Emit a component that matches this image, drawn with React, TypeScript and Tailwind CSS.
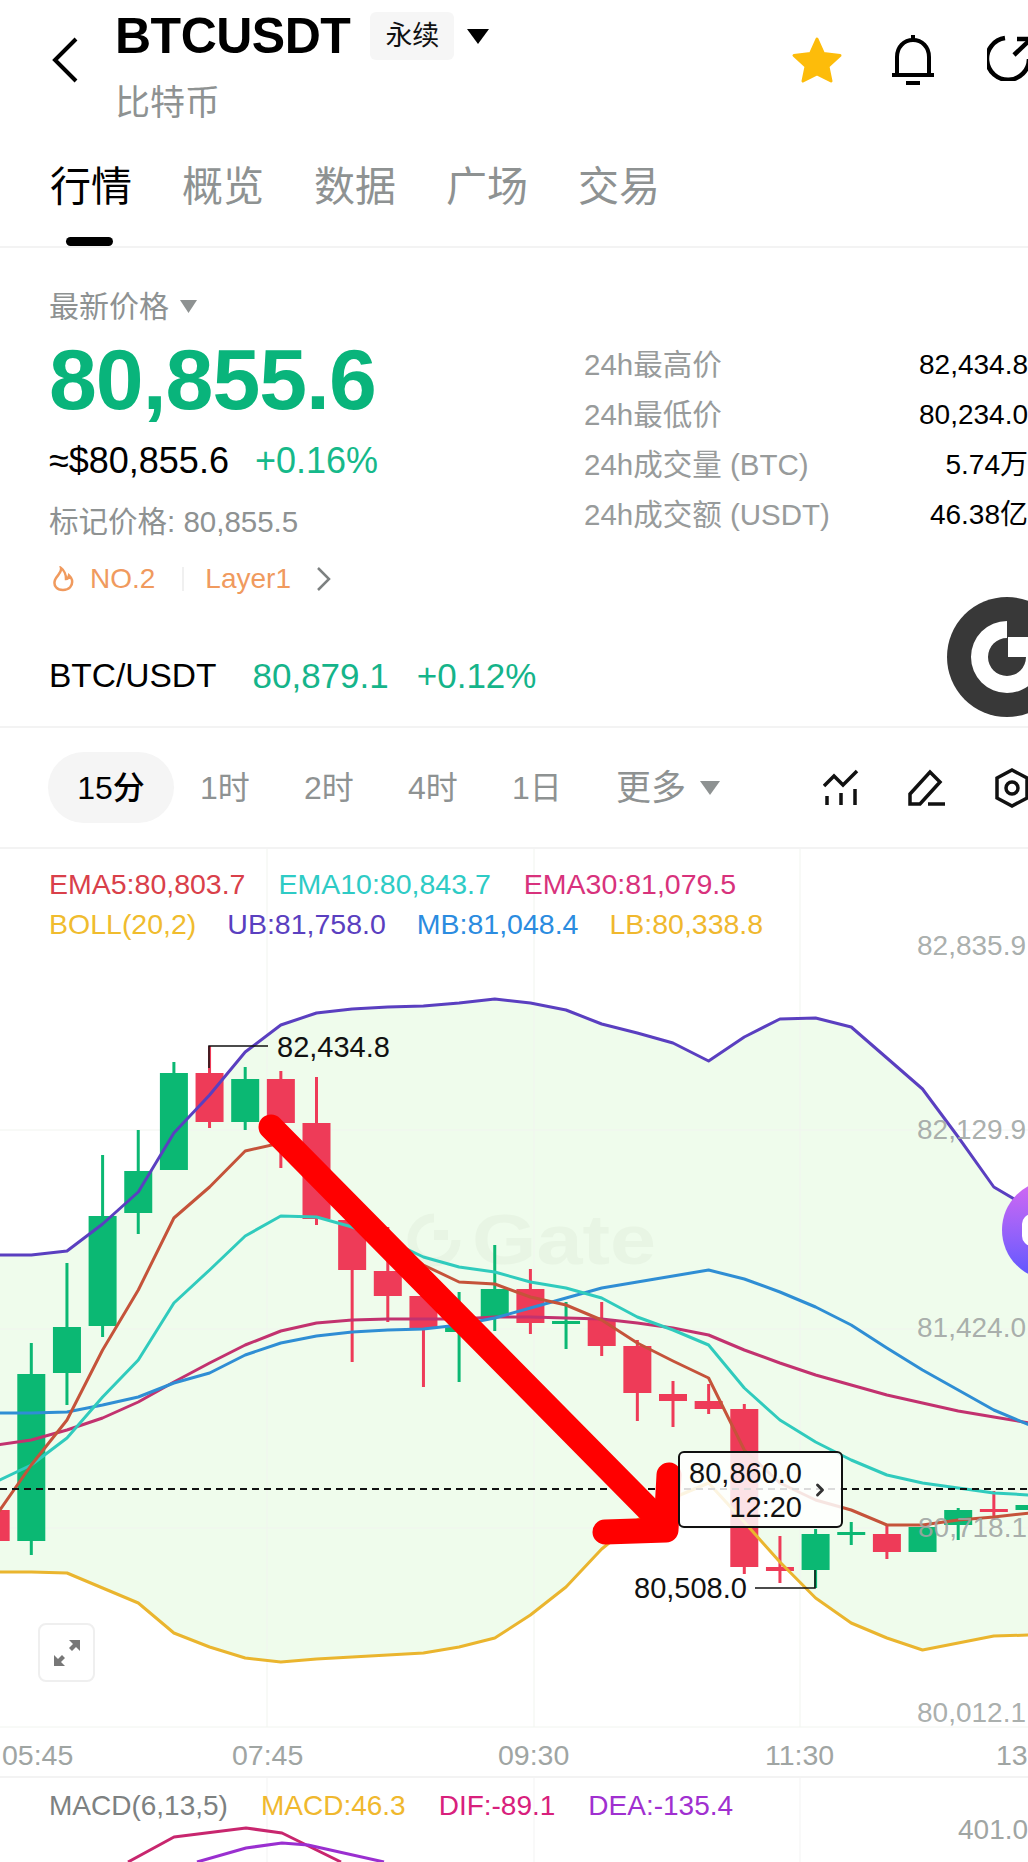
import { ChevronRight } from "lucide-react"

const FONT = "font-['Liberation_Sans','Noto_Sans_CJK_SC',sans-serif]"

const X = (i: number) => 31.3 + 35.65 * i

// y values per candle slot, starting at i = -1
const UB = [1255, 1255, 1251, 1224, 1192, 1133, 1095, 1052, 1025, 1013, 1009, 1007, 1006, 1003, 999, 1003, 1010, 1024, 1033, 1043, 1061, 1037, 1019, 1018, 1027, 1058, 1089, 1137, 1187, 1208]
const LB = [1572, 1572, 1573, 1588, 1603, 1633, 1647, 1658, 1662, 1659, 1657, 1655, 1653, 1647, 1638, 1615, 1587, 1549, 1520, 1498, 1483, 1522, 1562, 1598, 1623, 1638, 1650, 1643, 1636, 1635]
const MB = [1413, 1413, 1412, 1405, 1397, 1383, 1373, 1355, 1343, 1336, 1332, 1330, 1329, 1325, 1318, 1308, 1298, 1288, 1282, 1276, 1270, 1279, 1292, 1307, 1325, 1348, 1370, 1390, 1410, 1425]
const EMA30 = [1445, 1440, 1430, 1418, 1402, 1382, 1363, 1345, 1331, 1323, 1320, 1319, 1319, 1319, 1317, 1317, 1318, 1319, 1323, 1328, 1335, 1350, 1363, 1375, 1385, 1395, 1403, 1411, 1417, 1423]
const EMA10 = [1482, 1465, 1438, 1397, 1360, 1303, 1270, 1236, 1216, 1217, 1227, 1240, 1257, 1267, 1272, 1282, 1288, 1298, 1317, 1330, 1345, 1388, 1420, 1442, 1460, 1475, 1483, 1488, 1493, 1495]
const EMA5 = [1516, 1465, 1420, 1350, 1290, 1218, 1187, 1151, 1143, 1173, 1210, 1237, 1265, 1282, 1284, 1297, 1305, 1320, 1343, 1361, 1378, 1450, 1483, 1500, 1510, 1525, 1525, 1520, 1517, 1513]

const pts = (ys: number[]) => ys.map((y, k) => `${X(k - 1).toFixed(1)},${y}`).join(" ")

const RED = "#ee3b58"
const GREEN = "#0bb873"

// i, wick top, body top, body bottom, wick bottom, up?
const CANDLES: Array<[number, number, number, number, number, boolean]> = [
  [-1, 1500, 1510, 1541, 1541, false],
  [0, 1343, 1374, 1541, 1555, true],
  [1, 1263, 1327, 1373, 1405, true],
  [2, 1155, 1216, 1326, 1337, true],
  [3, 1130, 1171, 1213, 1234, true],
  [4, 1062, 1073, 1170, 1170, true],
  [5, 1046, 1073, 1122, 1128, false],
  [6, 1067, 1079, 1122, 1130, true],
  [7, 1071, 1079, 1123, 1168, false],
  [8, 1077, 1123, 1219, 1225, false],
  [9, 1219, 1220, 1270, 1362, false],
  [10, 1227, 1271, 1296, 1322, false],
  [11, 1280, 1296, 1328, 1387, false],
  [12, 1292, 1325, 1332, 1382, true],
  [13, 1245, 1289, 1317, 1331, true],
  [14, 1269, 1289, 1323, 1334, false],
  [15, 1302, 1321, 1323, 1349, true],
  [16, 1302, 1319, 1346, 1356, false],
  [17, 1340, 1346, 1393, 1421, false],
  [18, 1381, 1394, 1401, 1427, false],
  [19, 1384, 1401, 1409, 1414, false],
  [20, 1404, 1409, 1567, 1574, false],
  [21, 1536, 1567, 1571, 1583, false],
  [22, 1529, 1534, 1570, 1588, true],
  [23, 1522, 1532, 1534, 1545, true],
  [24, 1525, 1534, 1552, 1559, false],
  [25, 1527, 1527, 1552, 1552, true],
  [26, 1508, 1510, 1525, 1540, true],
  [27, 1491, 1509, 1511, 1520, false],
  [28, 1500, 1505, 1510, 1515, true],
]

const TABS = ["行情", "概览", "数据", "广场", "交易"]
const STATS = [
  ["24h最高价", "82,434.8"],
  ["24h最低价", "80,234.0"],
  ["24h成交量 (BTC)", "5.74万"],
  ["24h成交额 (USDT)", "46.38亿"],
]
const FRAMES = ["1时", "2时", "4时", "1日"]

function Header() {
  return (
    <header className="h-[248px] border-b-2 border-[#f3f3f3] relative">
      <div className="flex pl-[52px] pt-[11px]">
        <svg width="26" height="46" viewBox="0 0 26 46" className="mt-[26px] shrink-0" fill="none">
          <path d="M24 2 L3 23 L24 44" stroke="#000" strokeWidth="4" />
        </svg>
        <div className="ml-[37px]">
          <div className="flex items-center h-[50px]">
            <span className="text-[50px] leading-[50px] font-bold text-black tracking-[-0.5px]">BTCUSDT</span>
            <span className="ml-[20px] w-[84px] h-[48px] rounded-[6px] bg-[#f6f6f6] flex items-center justify-center text-[27px] text-[#111]">永续</span>
            <svg width="22" height="15" viewBox="0 0 22 15" className="ml-[13px]"><path d="M0 0 H22 L11 15 Z" fill="#000" /></svg>
          </div>
          <div className="mt-[23px] text-[35px] leading-[38px] text-[#8e9292]">比特币</div>
        </div>
        <div className="ml-auto flex items-start pt-[24px]">
          <svg width="52" height="48" viewBox="0 0 52 48" className="mt-[1px]">
            <path d="M26 3 L32.5 17.5 L49 19.5 L37 30.5 L40 45 L26 38 L12 45 L15 30.5 L3 19.5 L19.5 17.5 Z" fill="#fdbc0a" stroke="#fdbc0a" strokeWidth="3" strokeLinejoin="round" />
          </svg>
          <svg width="44" height="50" viewBox="0 0 44 50" className="ml-[48px]" fill="none" stroke="#000" strokeWidth="4">
            <path d="M22 0 V5" />
            <path d="M6 40 V22 C6 12 13 5 22 5 C31 5 38 12 38 22 V40" />
            <path d="M1 40 H43" />
            <path d="M15 48 H29" />
          </svg>
          <svg width="44" height="46" viewBox="0 0 44 46" className="ml-[52px] -mr-[3px] shrink-0" fill="none" stroke="#000" strokeWidth="4.5">
            <path d="M18 3 A21 21 0 1 0 42 24" />
            <path d="M27 20 L46 2" />
            <path d="M30 4 H44 V18" />
          </svg>
        </div>
      </div>
      <nav className="flex gap-[52px] pl-[50px] mt-[42px]">
        {TABS.map((t, i) => (
          <span key={t} className={`text-[41px] leading-[46px] w-[80px] whitespace-nowrap ${i === 0 ? "text-black" : "text-[#8e9292]"}`}>{t}</span>
        ))}
      </nav>
      {/* active tab marker */}
      <div className="absolute left-[66px] bottom-0 w-[47px] h-[9px] rounded-full bg-black" />
    </header>
  )
}

function GateBadge() {
  return (
    <svg width="81" height="120" viewBox="947 597 81 120" className="absolute right-0 top-[597px]">
      <circle cx="1007" cy="657" r="60" fill="#383838" />
      <path d="M1007 621 A36 36 0 1 0 1043 657 L1026 657 A19 19 0 1 1 1007 638 Z" fill="#fff" />
      <rect x="1008" y="637" width="22" height="20" fill="#fff" />
    </svg>
  )
}

function PriceSection() {
  return (
    <section className="h-[480px] border-b-2 border-[#f3f3f3] relative">
      <div className="flex pl-[49px] pt-[43px]">
        <div className="w-[535px] shrink-0">
          <div className="flex items-center h-[30px] text-[30px] text-[#8e9292]">
            最新价格
            <svg width="17" height="13" viewBox="0 0 17 13" className="ml-[11px]"><path d="M0 0 H17 L8.5 13 Z" fill="#8e9292" /></svg>
          </div>
          <div className="mt-[15px] text-[86px] leading-[86px] font-bold text-[#09b47b] tracking-[-1px]">80,855.6</div>
          <div className="mt-[19px] flex items-center h-[40px]">
            <span className="text-[36px] text-black">≈$80,855.6</span>
            <span className="ml-[26px] text-[36px] text-[#16b98a]">+0.16%</span>
          </div>
          <div className="mt-[21px] text-[29.5px] leading-[40px] text-[#8e9292]">标记价格: 80,855.5</div>
          <div className="mt-[20px] flex items-center h-[34px] text-[28px] text-[#f09a5e]">
            <svg width="22" height="26" viewBox="0 0 22 26" className="ml-[3px]" fill="none" stroke="#f09a5e" strokeWidth="2.5">
              <path d="M9 2 C10 7 5 9 3 14 C1 20 5 24 11 24 C17 24 21 20 20 14 C19.5 12 18.5 11 17 9.5 C16.5 12 15 13 14 13 C14 9 12 4 9 2 Z" />
            </svg>
            <span className="ml-[16px]">NO.2</span>
            <span className="ml-[27px] w-[2px] h-[24px] bg-[#f0f0f0]" />
            <span className="ml-[21px]">Layer1</span>
            <svg width="15" height="24" viewBox="0 0 15 24" className="ml-[25px]" fill="none" stroke="#7d8181" strokeWidth="2.5">
              <path d="M2 1 L13 12 L2 23" />
            </svg>
          </div>
        </div>
        <div className="flex-1 pt-[49px]">
          {STATS.map(([k, v]) => (
            <div key={k} className="flex justify-between items-center h-[50px]">
              <span className="text-[29.5px] text-[#989b9b]">{k}</span>
              <span className="text-[28px] text-black">{v}</span>
            </div>
          ))}
        </div>
      </div>
      <div className="flex items-center h-[40px] pl-[49px] mt-[60px] text-[35px]">
        <span className="text-black text-[33.5px]">BTC/USDT</span>
        <span className="ml-[36px] text-[#15b48a]">80,879.1</span>
        <span className="ml-[28px] text-[#15b48a]">+0.12%</span>
      </div>
    </section>
  )
}

function FrameBar() {
  return (
    <section className="h-[121px] flex items-center pl-[48px] border-b-2 border-[#f3f3f3]">
      <div className="w-[126px] h-[71px] rounded-full bg-[#f5f5f5] flex items-center justify-center text-[32px] font-medium text-black mr-[26px]">15分</div>
      {FRAMES.map((f) => (
        <span key={f} className="w-[104px] text-[32px] text-[#8e9292]">{f}</span>
      ))}
      <span className="text-[35px] text-[#8e9292] mt-[2px]">更多</span>
      <svg width="20" height="14" viewBox="0 0 20 14" className="ml-[14px]"><path d="M0 0 H20 L10 14 Z" fill="#8e9292" /></svg>
      <div className="ml-auto flex items-center shrink-0">
        <svg width="36" height="38" viewBox="0 0 36 38" fill="none" stroke="#111" strokeWidth="3.5">
          <path d="M1 17 L11 7 L20 16 L34 2" />
          <path d="M4 27 V36 M18 24 V36 M32 20 V36" />
        </svg>
        <svg width="38" height="38" viewBox="0 0 38 38" className="ml-[49px]" fill="none" stroke="#111" strokeWidth="3.5">
          <path d="M2 25 L22 3 L32 13 L12 35 H2 Z" />
          <path d="M20 35 H37" />
        </svg>
        <svg width="36" height="40" viewBox="0 0 36 40" className="ml-[48px] -mr-[2px]" fill="none" stroke="#111" strokeWidth="3.5">
          <path d="M18 2 L33 10 V30 L18 38 L3 30 V10 Z" />
          <circle cx="18" cy="20" r="6" />
        </svg>
      </div>
    </section>
  )
}

const AXIS = [
  { label: "82,835.9", top: 931, left: 917 },
  { label: "82,129.9", top: 1115, left: 917 },
  { label: "81,424.0", top: 1313, left: 917 },
  { label: "80,718.1", top: 1513, left: 918 },
  { label: "80,012.1", top: 1698, left: 917 },
]

function Chart() {
  const band = `${pts(UB)} ${pts(LB).split(" ").reverse().join(" ")}`
  return (
    <section className="relative h-[929px] border-b-2 border-[#f3f3f3] overflow-hidden">
      <svg className="absolute inset-0" width="1028" height="929" viewBox="0 849 1028 929" fill="none">
        <polygon points={band} fill="#effcec" />
        {[267, 534, 800].map((x) => <path key={x} d={`M${x} 849 V1727`} stroke="#f1f4ef" strokeWidth="1" />)}
        {[1130, 1329, 1528, 1727].map((y) => <path key={y} d={`M0 ${y} H1028`} stroke="#f1f4ef" strokeWidth="1" />)}

        {/* watermark */}
        <g stroke="#e8f5e4" fill="none">
          <path d="M434 1218 A22 22 0 1 0 456 1240" strokeWidth="9" />
          <rect x="434" y="1230" width="14" height="10" fill="#e8f5e4" strokeWidth="0" />
        </g>
        <text x="472" y="1264" fontSize="70" fontWeight="700" fill="#e8f5e4" fontFamily="Liberation Sans, sans-serif" textLength="184" lengthAdjust="spacingAndGlyphs">Gate</text>

        {CANDLES.map(([i, wt, bt, bb, wb, up]) => {
          const c = up ? GREEN : RED
          const x = X(i)
          return (
            <g key={i} fill={c}>
              <rect x={x - 1.5} y={wt} width="3" height={wb - wt} />
              <rect x={x - 14} y={bt} width="28" height={Math.max(bb - bt, 3)} />
            </g>
          )
        })}

        <polyline points={pts(EMA30)} stroke="#c2326f" strokeWidth="3" strokeLinejoin="round" />
        <polyline points={pts(MB)} stroke="#2f8ed4" strokeWidth="3" strokeLinejoin="round" />
        <polyline points={pts(EMA10)} stroke="#30cbbd" strokeWidth="3" strokeLinejoin="round" />
        <polyline points={pts(EMA5)} stroke="#c5533a" strokeWidth="3" strokeLinejoin="round" />
        <polyline points={pts(UB)} stroke="#5a3fc0" strokeWidth="3" strokeLinejoin="round" />
        <polyline points={pts(LB)} stroke="#eab52e" strokeWidth="3" strokeLinejoin="round" />

        <path d="M0 1489 H1028" stroke="#111" strokeWidth="2" strokeDasharray="7 5" />
        <path d="M209 1068 V1046 H268" stroke="#111" strokeWidth="1.5" />
        <path d="M755 1588 H815 V1570" stroke="#111" strokeWidth="1.5" />

        {/* hand drawn arrow */}
        <g stroke="#ff0000" strokeWidth="25" strokeLinecap="round" strokeLinejoin="round">
          <path d="M271 1127 L664 1525" />
          <path d="M669 1475 L666 1530 L605 1532" />
        </g>
      </svg>

      <div className="relative pt-[15px] pl-[49px] text-[28.5px] leading-[40px]">
        <div className="flex gap-[33px]">
          <span className="text-[#d9404a]">EMA5:80,803.7</span>
          <span className="text-[#2ecbc5]">EMA10:80,843.7</span>
          <span className="text-[#d8327c]">EMA30:81,079.5</span>
        </div>
        <div className="flex gap-[31px]">
          <span className="text-[#f0bc2e]">BOLL(20,2)</span>
          <span className="text-[#5a3fc0]">UB:81,758.0</span>
          <span className="text-[#2b8ce0]">MB:81,048.4</span>
          <span className="text-[#f0b82e]">LB:80,338.8</span>
        </div>
      </div>

      {AXIS.map((a) => (
        <span key={a.label} className="absolute text-[28px] leading-[30px] text-[#a0a5a3]/90 whitespace-nowrap" style={{ left: a.left, top: a.top - 849 }}>{a.label}</span>
      ))}
      <span className="absolute left-[277px] top-[183px] text-[29px] leading-[30px] text-[#111]">82,434.8</span>
      <span className="absolute left-[634px] top-[724px] text-[29px] leading-[30px] text-[#111]">80,508.0</span>

      {/* price tooltip */}
      <div className="absolute left-[678px] top-[602px] w-[165px] h-[77px] rounded-[6px] border-2 border-[#111] bg-white/85 pr-[39px] text-right text-[29px] leading-[34px] text-[#111] pt-[3px]">
        <div>80,860.0</div>
        <div>12:20</div>
        <ChevronRight className="absolute right-[11px] top-[27px] text-[#333]" size={20} strokeWidth={3.5} />
      </div>

      {/* expand button */}
      <div className="absolute left-[38px] top-[774px] w-[57px] h-[59px] rounded-[8px] border-2 border-[#efefef] bg-white flex items-center justify-center">
        <svg width="30" height="30" viewBox="0 0 30 30" fill="#777">
          <path d="M17 2 H28 V13 L24 9 L20 13 L17 10 L21 6 Z" />
          <path d="M13 28 H2 V17 L6 21 L10 17 L13 20 L9 24 Z" />
        </svg>
      </div>

      {/* floating assistant */}
      <div className="absolute left-[1002px] top-[331px] w-[100px] h-[100px] rounded-full bg-gradient-to-b from-[#d566f2] to-[#5a55ff]">
        <div className="absolute left-[20px] top-[34px] w-[30px] h-[32px] rounded-[10px] bg-white" />
      </div>

      {["05:45", "07:45", "09:30", "11:30"].map((t, i) => (
        <span key={t} className="absolute top-[891px] text-[28.5px] leading-[30px] text-[#a0a5a3]" style={{ left: [2, 232, 498, 765][i] }}>{t}</span>
      ))}
      <span className="absolute left-[996px] top-[891px] text-[28.5px] leading-[30px] text-[#a0a5a3]">13:30</span>
    </section>
  )
}

function Macd() {
  return (
    <section className="relative h-[84px] overflow-hidden">
      <svg className="absolute inset-0" width="1028" height="84" viewBox="0 1778 1028 84" fill="none">
        {[267, 534, 800].map((x) => <path key={x} d={`M${x} 1778 V1862`} stroke="#f3f3f3" strokeWidth="1" />)}
        <path d="M128 1862 L174 1837 L246 1828 L282 1833 L341 1862" stroke="#c8266e" strokeWidth="3" strokeLinejoin="round" />
        <path d="M197 1862 L246 1848 L282 1843 L308 1845 L384 1862" stroke="#9a2fd0" strokeWidth="3" strokeLinejoin="round" />
      </svg>
      <div className="relative flex gap-[33px] pl-[49px] pt-[8px] text-[28px] leading-[40px]">
        <span className="text-[#7d8181]">MACD(6,13,5)</span>
        <span className="text-[#f0b82e]">MACD:46.3</span>
        <span className="text-[#d8207c]">DIF:-89.1</span>
        <span className="text-[#a030d0]">DEA:-135.4</span>
      </div>
      <span className="absolute left-[958px] top-[37px] text-[28px] leading-[30px] text-[#a0a5a3]">401.0</span>
    </section>
  )
}

export default function App() {
  return (
    <div className={`relative w-[1028px] h-[1862px] overflow-hidden bg-white ${FONT}`}>
      <Header />
      <PriceSection />
      <FrameBar />
      <Chart />
      <Macd />
      <GateBadge />
    </div>
  )
}
